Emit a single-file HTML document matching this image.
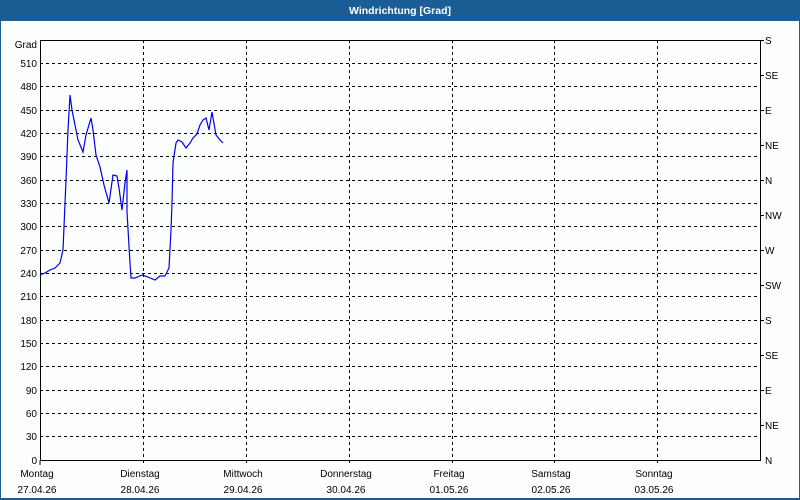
<!DOCTYPE html>
<html><head><meta charset="utf-8"><style>
html,body{margin:0;padding:0;width:800px;height:500px;overflow:hidden;background:#fff;font-family:"Liberation Sans",sans-serif}
</style></head><body>
<svg width="800" height="500" xmlns="http://www.w3.org/2000/svg" style="display:block">
<rect x="0" y="0" width="800" height="500" fill="#1b5e96"/>
<rect x="1" y="21" width="798" height="477" fill="#fdfefe"/>
<text x="400" y="14" fill="#fff" font-size="10.5" font-weight="bold" text-anchor="middle">Windrichtung [Grad]</text>
<g stroke="#000" stroke-dasharray="3,3" stroke-width="1">
<line x1="40" y1="63.5" x2="760" y2="63.5"/>
<line x1="40" y1="86.5" x2="760" y2="86.5"/>
<line x1="40" y1="110.5" x2="760" y2="110.5"/>
<line x1="40" y1="133.5" x2="760" y2="133.5"/>
<line x1="40" y1="156.5" x2="760" y2="156.5"/>
<line x1="40" y1="180.5" x2="760" y2="180.5"/>
<line x1="40" y1="203.5" x2="760" y2="203.5"/>
<line x1="40" y1="226.5" x2="760" y2="226.5"/>
<line x1="40" y1="250.5" x2="760" y2="250.5"/>
<line x1="40" y1="273.5" x2="760" y2="273.5"/>
<line x1="40" y1="296.5" x2="760" y2="296.5"/>
<line x1="40" y1="320.5" x2="760" y2="320.5"/>
<line x1="40" y1="343.5" x2="760" y2="343.5"/>
<line x1="40" y1="366.5" x2="760" y2="366.5"/>
<line x1="40" y1="390.5" x2="760" y2="390.5"/>
<line x1="40" y1="413.5" x2="760" y2="413.5"/>
<line x1="40" y1="436.5" x2="760" y2="436.5"/>
<line x1="143.5" y1="40" x2="143.5" y2="465"/>
<line x1="246.5" y1="40" x2="246.5" y2="465"/>
<line x1="349.5" y1="40" x2="349.5" y2="465"/>
<line x1="452.5" y1="40" x2="452.5" y2="465"/>
<line x1="554.5" y1="40" x2="554.5" y2="465"/>
<line x1="657.5" y1="40" x2="657.5" y2="465"/>
</g>
<g stroke="#000" stroke-width="1" fill="none">
<polyline points="40.5,40.5 760.5,40.5 760.5,460.5 40.5,460.5 40.5,40"/>
<line x1="40" y1="460.5" x2="40" y2="465"/>
<line x1="760" y1="75.5" x2="764" y2="75.5"/><line x1="760" y1="110.5" x2="764" y2="110.5"/><line x1="760" y1="145.5" x2="764" y2="145.5"/><line x1="760" y1="180.5" x2="764" y2="180.5"/><line x1="760" y1="215.5" x2="764" y2="215.5"/><line x1="760" y1="250.5" x2="764" y2="250.5"/><line x1="760" y1="285.5" x2="764" y2="285.5"/><line x1="760" y1="320.5" x2="764" y2="320.5"/><line x1="760" y1="355.5" x2="764" y2="355.5"/><line x1="760" y1="390.5" x2="764" y2="390.5"/><line x1="760" y1="425.5" x2="764" y2="425.5"/><line x1="760" y1="40.5" x2="764" y2="40.5"/>
</g>
<polyline fill="none" stroke="#0000ee" stroke-width="1.2" points="40,275 45,273 50,270 55,268 60,263 63,250 66,180 68,130 70,95 72,110 75,125 78,140 83,152 86,135 91,118 93,130 96,155 100,167 104,185 109,203 113,175 117,176 119,188 122,210 125,183 127,170 127,212 130,263 131,278 135,278 142,275 148,277 155,280 160,276 165,276 169,268 171,230 172,203 173,163 176,143 178,140 182,142 186,148 190,143 193,138 197,134 200,125 203,120 206,118 209,130 212,112 216,135 220,140 223,143"/>
<g font-size="10" fill="#000" text-anchor="end">
<text x="37" y="48">Grad</text>
<text x="37" y="67">510</text><text x="37" y="90">480</text><text x="37" y="114">450</text><text x="37" y="137">420</text><text x="37" y="160">390</text><text x="37" y="184">360</text><text x="37" y="207">330</text><text x="37" y="230">300</text><text x="37" y="254">270</text><text x="37" y="277">240</text><text x="37" y="300">210</text><text x="37" y="324">180</text><text x="37" y="347">150</text><text x="37" y="370">120</text><text x="37" y="394">90</text><text x="37" y="417">60</text><text x="37" y="440">30</text><text x="37" y="464">0</text>
</g>
<g font-size="10" fill="#000">
<text x="765" y="44">S</text><text x="765" y="79">SE</text><text x="765" y="114">E</text><text x="765" y="149">NE</text><text x="765" y="184">N</text><text x="765" y="219">NW</text><text x="765" y="254">W</text><text x="765" y="289">SW</text><text x="765" y="324">S</text><text x="765" y="359">SE</text><text x="765" y="394">E</text><text x="765" y="429">NE</text><text x="765" y="464">N</text>
</g>
<g font-size="10" fill="#000" text-anchor="middle">
<text x="37" y="477">Montag</text><text x="37" y="493">27.04.26</text>
<text x="140" y="477">Dienstag</text><text x="140" y="493">28.04.26</text>
<text x="243" y="477">Mittwoch</text><text x="243" y="493">29.04.26</text>
<text x="346" y="477">Donnerstag</text><text x="346" y="493">30.04.26</text>
<text x="449" y="477">Freitag</text><text x="449" y="493">01.05.26</text>
<text x="551" y="477">Samstag</text><text x="551" y="493">02.05.26</text>
<text x="654" y="477">Sonntag</text><text x="654" y="493">03.05.26</text>
</g>
</svg>
</body></html>
